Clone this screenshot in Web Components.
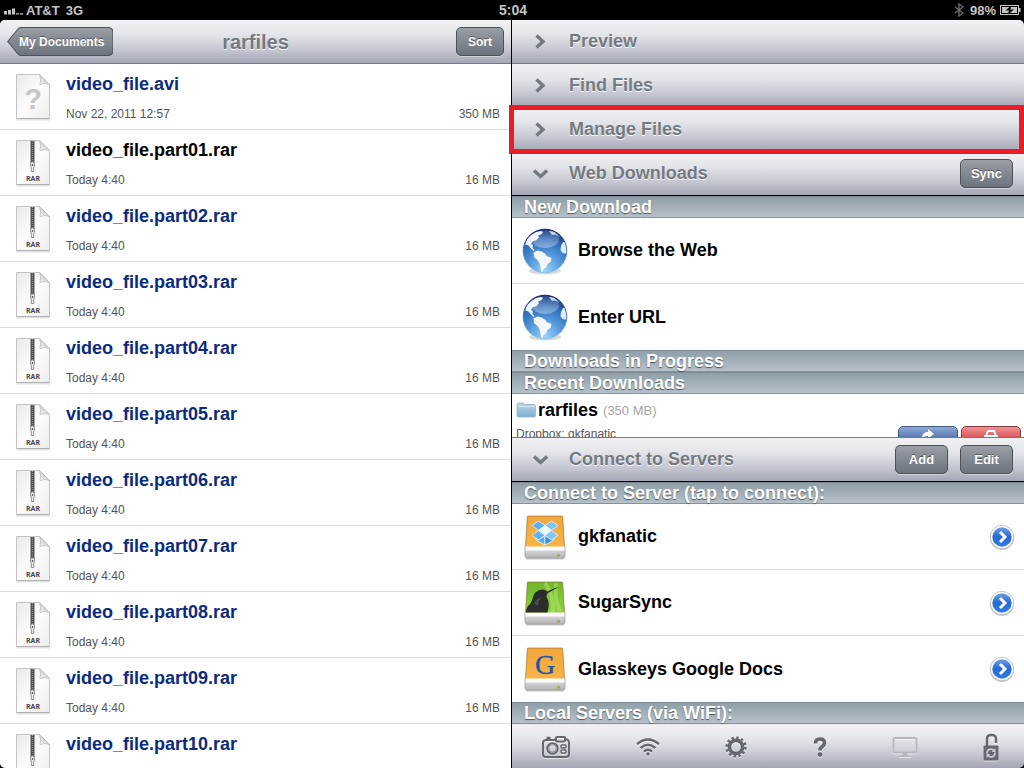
<!DOCTYPE html>
<html lang="en">
<head>
    <meta charset="UTF-8">
    <meta name="viewport" content="width=device-width, initial-scale=1.0">
    <title>rarfiles</title>
    <style>
        body {
            margin: 0;
            background: #000;
            font-family: "Liberation Sans", Arial, Helvetica, sans-serif;
            --bar: linear-gradient(#f2f2f5, #e3e4e9 35%, #c4c7d0 70%, #a3a6b5);
            --bar-line: #757984;
            --label: #747a82;
            --row-line: #dcdcdc;
        }
    </style>
</head>
<body>
    <file-manager></file-manager>

    <script>
        // Creates a shadow root from a template string
        function attach(el, html) {
            const template = document.createElement('template');
            template.innerHTML = html;
            el.attachShadow({ mode: 'open' }).appendChild(template.content.cloneNode(true));
        }

        const page = `
            <defs>
                <linearGradient id="p" x1="0" y1="0" x2="1" y2="1">
                    <stop offset="0" stop-color="#e9e9e9"/><stop offset=".5" stop-color="#fcfcfc"/><stop offset="1" stop-color="#ededed"/>
                </linearGradient>
                <linearGradient id="f" x1="0" y1="1" x2="1" y2="0">
                    <stop offset="0" stop-color="#fff"/><stop offset=".5" stop-color="#d2d2d2"/><stop offset="1" stop-color="#fff"/>
                </linearGradient>
            </defs>
            <path d="M1 47h34" stroke="#000" stroke-opacity=".12" stroke-width="1"/>
            <path d="M1.5 1.5h23l10 10v34h-33z" fill="url(#p)" stroke="#c3c3c3"/>
            <path d="M1.5 45.7h33" stroke="#aaa"/>
            <path d="M24.5 1.5q2 5 .5 10q5-2 9.500 0z" fill="url(#f)" stroke="#bbb" stroke-width=".8"/>`;

        const drive = (id, a, b) => `
            <defs>
                <linearGradient id="${id}" x1="0" y1="0" x2="0" y2="1"><stop offset="0" stop-color="${a}"/><stop offset="1" stop-color="${b}"/></linearGradient>
                <linearGradient id="base" x1="0" y1="0" x2="0" y2="1"><stop offset="0" stop-color="#d4d4d4"/><stop offset="1" stop-color="#b4b4b4"/></linearGradient>
            </defs>
            <path d="M5 45.500h38" stroke="#000" stroke-opacity=".22" stroke-width="2"/>
            <path d="M7 3h34q.6 0 .7.800L43.500 34v3h-39v-3L6.300 3.800q.1-.8.700-.8z" fill="url(#${id})" stroke="#8a6528" stroke-opacity=".75" stroke-width=".8"/>
            <path d="M4 33.500h40V38H4z" fill="#fdfdfd"/>
            <path d="M4 37.500h40V43q0 2-2 2H6q-2 0-2-2z" fill="url(#base)"/>
            <path d="M4 33v10q0 2 2 2h36q2 0 2-2V33" fill="none" stroke="#999" stroke-width=".7"/>
            <circle cx="37.500" cy="42" r="1.500" fill="#9a9a35"/><circle cx="37.500" cy="41.600" r=".6" fill="#e5e58a"/>`;

        const globe = `
            <defs>
                <radialGradient id="g" cx=".5" cy=".95" r="1"><stop offset="0" stop-color="#9bd3fb"/><stop offset=".35" stop-color="#5a9fe0"/><stop offset=".7" stop-color="#2e6bb8"/><stop offset="1" stop-color="#101f66"/></radialGradient>
                <linearGradient id="s" x1="0" y1="0" x2="0" y2="1"><stop offset="0" stop-color="#fff" stop-opacity=".1"/><stop offset="1" stop-color="#fff" stop-opacity=".35"/></linearGradient>
                <linearGradient id="r" x1="0" y1="0" x2="0" y2="1"><stop offset="0" stop-color="#14205c"/><stop offset=".6" stop-color="#5e93cc"/><stop offset="1" stop-color="#8ec2ee"/></linearGradient>
                <clipPath id="c"><circle cx="24" cy="24" r="21.800"/></clipPath>
            </defs>
            <ellipse cx="24" cy="44" rx="16" ry="3.500" fill="#000" fill-opacity=".15"/>
            <circle cx="24" cy="24" r="21.800" fill="url(#g)"/>
            <g clip-path="url(#c)">
                <path d="M4 21Q4 12 11 7.500l4-2.500 5-1 2 1-2 2.500-3 1 1 2-3 3-3 .5-2 3 2 1-.5 3 2 2-1 1-3-3-2-2.500-3-1z" fill="#eef5fc"/>
                <path d="M12.500 25.500l4-2 4 1 4 2.500 1 2 5 2-1 4-3 2-1.500 3.500-2.500 1.500-1 3-1.500-.5-1-7-2-4-4-3.500z" fill="#f5f9fd"/>
                <path d="M47 14l-5 1-2 4-.5 4 2 3 5.500 1z" fill="#dfedf9"/>
                <path d="M28 4l5 .5 6 5.500-5-2.500-3 .5z" fill="#b5d2ec"/>
                <ellipse cx="24" cy="12" rx="14" ry="9" fill="url(#s)"/>
            </g>
            <circle cx="24" cy="24" r="21.800" fill="none" stroke="url(#r)" stroke-width="1"/>`;

        const ICONS = {
            unknown: ['36 48', page + `<text x="18" y="36" text-anchor="middle" font-size="29" font-weight="bold" fill="#c6c6c6">?</text>`],
            rar: ['36 48', page + `
                <path d="M15.500 2h4v22h-4z" fill="#555"/>
                <path d="M17.500 2v21" stroke="#8c8c8c" stroke-dasharray="1 1"/>
                <path d="M16 23h3l.7 4-1 1v4.500h-2.400V28l-1-1z" fill="#eee" stroke="#777" stroke-width=".8"/>
                <circle cx="17.500" cy="26" r=".9" fill="#555"/>
                <text x="18" y="42" text-anchor="middle" font-family="Noto Sans, sans-serif" font-size="7" font-weight="bold" fill="#4a4a4a">RAR</text>`],
            globe: ['48 48', globe],
            dropbox: ['48 48', drive('o', '#f2a63c', '#fbb545') + `
                <g stroke="#eaf5fb" stroke-width=".8" stroke-linejoin="round">
                    <path d="M17.500 8l6.500 4.500-6.500 5-6.500-5z" fill="#5cb0ee"/>
                    <path d="M30.500 8L24 12.500l6.500 5 6.500-5z" fill="#7cc6f6"/>
                    <path d="M24 12.500l6.500 5L24 22.500l-6.500-5z" fill="#eaf7ff"/>
                    <path d="M17.500 17.500l6.500 5-6.500 4.500-6.500-4.500z" fill="#62b2ee"/>
                    <path d="M30.500 17.500l-6.500 5 6.500 4.500 6.500-4.500z" fill="#7fc5f5"/>
                    <path d="M24 22.500L17.500 27 15 25.500V27l9 5z" fill="#5aaeec"/>
                    <path d="M24 22.500l6.500 4.500 2.500-1.500V27l-9 5z" fill="#3a8fd8"/>
                </g>`],
            sugarsync: ['48 48', drive('g', '#6fb42a', '#8fd63c') + `
                <path d="M24 4q9 12 8 29M35 4q-2 16 4 28" fill="none" stroke="#b6e873" stroke-width="4" stroke-opacity=".5"/>
                <path d="M5 33.500q0-5 4-8.500 2-2 3-7 1-5 6.500-7 5-1.500 7.500 1.500l10.500-4.500.3.600L27 14q-2 1-1.500 4 3 5 2 10.500-.5 3-1 5z" fill="#2b2d2b"/>
                <path d="M13 24q3-5 8-6-4 3-4 9" fill="#4a4d49"/>`],
            google: ['48 48', drive('o', '#f2a63c', '#fbb545') + `
                <text x="24" y="29" text-anchor="middle" font-family="Liberation Serif, serif" font-size="28" font-weight="normal" fill="#1f56ae" stroke="#1f56ae" stroke-width=".4">G</text>`],
            folder: ['22 16', `
                <defs><linearGradient id="d" x1="0" y1="0" x2="0" y2="1"><stop offset="0" stop-color="#b5d6ea"/><stop offset="1" stop-color="#7fb0d0"/></linearGradient></defs>
                <path d="M1 2.500q0-1.500 1.500-1.500h5l1.500 1.500h9q1.500 0 1.500 1.500v9.500q0 1.500-1.500 1.500h-16Q1 15 1 13.500z" fill="url(#d)" stroke="#89b0c8" stroke-width=".7"/>
                <path d="M1.500 4.500h17.500" stroke="#d5eaf5"/>`],
            go: ['26 26', `
                <defs>
                    <linearGradient id="b" x1="0" y1="0" x2="0" y2="1"><stop offset="0" stop-color="#6b9fe8"/><stop offset=".5" stop-color="#2769d6"/><stop offset="1" stop-color="#2f7fe6"/></linearGradient>
                </defs>
                <circle cx="13" cy="14" r="12" fill="#000" fill-opacity=".22"/>
                <circle cx="13" cy="13" r="11.700" fill="#fff" stroke="#a9a9a9" stroke-width=".7"/>
                <circle cx="13" cy="13" r="9.700" fill="url(#b)"/>
                <path d="M11 8l5 5-5 5" fill="none" stroke="#fff" stroke-width="3"/>`],
            right: ['16 16', `<path d="M4.500 1.500L11 7.500l-6.500 6" fill="none" stroke="currentColor" stroke-width="3.400"/>`],
            down: ['16 16', `<path d="M2 4.500l6.500 6 6.500-6" fill="none" stroke="currentColor" stroke-width="3.400"/>`],
            camera: ['30 24', `
                <g fill="none" stroke="currentColor" stroke-width="2">
                    <path d="M4 5h9l2-1M24 4q4 .500 4 4v11q0 3-3 3H5q-3 0-3-3V8q0-3 3-3"/>
                    <rect x="15" y="2" width="9" height="4.500" rx="1"/>
                    <circle cx="11.500" cy="13.500" r="5.300"/>
                    <circle cx="11.500" cy="13.500" r="3.700" stroke-width=".6"/>
                    <rect x="20" y="10" width="5" height="3" rx="1" stroke-width="1.600"/>
                    <rect x="20" y="15" width="5" height="3" rx="1" stroke-width="1.600"/>
                    <path d="M5.500 3h4" stroke-width="2.500"/>
                </g>`],
            wifi: ['24 18', `
                <g fill="none" stroke="currentColor" stroke-width="2.400">
                    <path d="M1 6.200Q12-3 23 6.200"/><path d="M4.500 10.200Q12 3.500 19.500 10.200"/><path d="M8 13.700Q12 10 16 13.700"/>
                </g>
                <circle cx="12" cy="16" r="1.700" fill="currentColor"/>`],
            gear: ['22 22', `
                <circle cx="11" cy="11" r="6.600" fill="none" stroke="currentColor" stroke-width="3.600"/>
                <circle cx="11" cy="11" r="9.300" fill="none" stroke="currentColor" stroke-width="2.600" stroke-dasharray="2.400 2.469"/>`],
            help: ['14 20', `
                <path d="M2.500 6.500Q2.500 2 7 2t4.500 4q0 2-2.500 3.800Q7 11.200 7 13.500" fill="none" stroke="currentColor" stroke-width="3.600"/>
                <circle cx="7" cy="17.500" r="2.300" fill="currentColor"/>`],
            monitor: ['26 22', `
                <rect x="1.500" y="2" width="23" height="14.500" rx="1.500" fill="none" stroke="currentColor" stroke-width="2"/>
                <path d="M10.500 17h5v2.500h3.500v1.500H7v-1.500h3.500z" fill="currentColor"/>`],
            lock: ['16 28', `
                <path d="M4 14V5.500Q4 2 8.500 2T13 5.500V10" fill="none" stroke="currentColor" stroke-width="2.400"/>
                <rect x=".5" y="12.500" width="15" height="15" rx="1" fill="currentColor"/>
                <path d="M4 20.500A4 4 0 0 1 10.500 17M12 19.500A4 4 0 0 1 5.500 23" fill="none" stroke="#c9ccd4" stroke-width="1.700"/>
                <path d="M12.500 15v4h-4zM3.500 25v-4h4z" fill="#c9ccd4"/>`],
            share: ['20 16', `<path d="M3 12q1-8 7-8V1l6 5-6 4.500V8Q5 8 3 12z" fill="#fff"/>`],
            tray: ['20 16', `<path d="M3 8h14M5 8l2-5h6l2 5M4 8v6h12V8" fill="none" stroke="#fff" stroke-width="2"/>`],
            signal: ['20 10', `
                <path d="M0 6h3v3.500H0zM4 5h3v4.500H4zM8 3.500h3v6H8z" fill="currentColor"/>
                <path d="M12 8.300h3v1.200h-3zM16 8.300h3v1.200h-3z" fill="currentColor"/>`],
            bluetooth: ['10 14', `<path d="M1 4l8 6-4 3V1l4 3-8 6" fill="none" stroke="#707070" stroke-width="1.300"/>`],
            battery: ['22 10', `
                <rect x=".5" y=".5" width="18" height="9" fill="none" stroke="currentColor"/>
                <path d="M2 2h15v6H2zM19 3h1.500v4H19z" fill="currentColor"/>
                <path d="M11 .5L5.500 5.500h3.500L8 9.500l6-5h-3.500z" fill="#000"/>`]
        };

        class AppIcon extends HTMLElement {
            connectedCallback() {
                if (this.shadowRoot) return;
                const [size, body] = ICONS[this.getAttribute('name')];
                const [w, h] = size.split(' ');
                attach(this, `
                    <style>
                        :host { display: block; flex: none; line-height: 0; }
                        svg { display: block; }
                    </style>
                    <svg width="${w}" height="${h}" viewBox="0 0 ${w} ${h}" aria-hidden="true">${body}</svg>
                `);
            }
        }

        class StatusBar extends HTMLElement {
            constructor() {
                super();
                attach(this, `
                    <style>
                        :host {
                            display: grid;
                            grid-template-columns: 1fr auto 1fr;
                            align-items: center;
                            height: 20px;
                            padding: 0 2px 0 4px;
                            background: #000;
                            color: #c4c4c4;
                            font-size: 13px;
                            font-weight: bold;
                        }
                        div { display: flex; align-items: center; }
                        .carrier { margin-left: 2px; }
                        .network { margin-left: 6px; }
                        .time { font-size: 14px; }
                        .right { justify-content: flex-end; gap: 4px; }
                        .right span { margin-left: 2px; }
                    </style>
                    <div>
                        <app-icon name="signal"></app-icon>
                        <span class="carrier">AT&amp;T</span>
                        <span class="network">3G</span>
                    </div>
                    <div class="time">5:04</div>
                    <div class="right">
                        <app-icon name="bluetooth"></app-icon>
                        <span>98%</span>
                        <app-icon name="battery"></app-icon>
                    </div>
                `);
            }
        }

        class BarButton extends HTMLElement {
            constructor() {
                super();
                attach(this, `
                    <style>
                        :host { display: block; }
                        button {
                            display: block;
                            box-sizing: border-box;
                            position: relative;
                            height: 29px;
                            margin: 0;
                            padding: 0 11px;
                            border: 1px solid #4d525a;
                            border-radius: 5px;
                            background: linear-gradient(#9b9fa6, #838991 50%, #6c737c);
                            box-shadow: 0 1px 0 rgba(255, 255, 255, 0.4);
                            color: #fff;
                            font: bold 12px "Liberation Sans", Arial, sans-serif;
                            text-shadow: 0 -1px 0 rgba(0, 0, 0, 0.4);
                            white-space: nowrap;
                        }
                        :host([wide]) button { min-width: 53px; padding: 0 8px; font-size: 13px; }
                        svg { display: none; }
                        span { position: relative; }
                        :host([back]) button {
                            padding: 0 9px 0 12px;
                            border: 0;
                            background: none;
                            box-shadow: none;
                        }
                        :host([back]) svg { display: block; position: absolute; inset: 0; width: 100%; height: 100%; }
                    </style>
                    <button type="button">
                        <svg viewBox="0 0 106 29" preserveAspectRatio="none" aria-hidden="true">
                            <defs><linearGradient id="a" x1="0" y1="0" x2="0" y2="1"><stop offset="0" stop-color="#9b9fa6"/><stop offset=".5" stop-color="#838991"/><stop offset="1" stop-color="#6c737c"/></linearGradient></defs>
                            <path d="M.7 14.500L10.500 2.500Q12 .5 14 .5h86.500q5 0 5 5v18q0 5-5 5H14q-2 0-3.500-2z" fill="url(#a)" stroke="#4d525a"/>
                        </svg>
                        <span><slot></slot></span>
                    </button>
                `);
            }
        }

        class FileRow extends HTMLElement {
            constructor() {
                super();
                attach(this, `
                    <style>
                        :host { display: block; border-bottom: 1px solid var(--row-line); }
                        a {
                            display: grid;
                            grid-template: 22px 16px / 36px 1fr auto;
                            column-gap: 15px;
                            row-gap: 11px;
                            box-sizing: border-box;
                            height: 65px;
                            padding: 9px 11px 7px 15px;
                            color: #555;
                            text-decoration: none;
                            font-size: 12px;
                            line-height: 16px;
                        }
                        app-icon { grid-row: 1 / 3; }
                        .name { grid-column: 2 / 4; color: #0a2b80; font-size: 18px; font-weight: bold; line-height: 22px; }
                        :host([current]) .name { color: #000; }
                    </style>
                    <a href="#">
                        <app-icon name="${this.getAttribute('icon') || 'rar'}"></app-icon>
                        <span class="name"><slot></slot></span>
                        <span>${this.getAttribute('date') || 'Today 4:40'}</span>
                        <span>${this.getAttribute('size') || '16 MB'}</span>
                    </a>
                `);
            }
        }

        class FileList extends HTMLElement {
            constructor() {
                super();
                attach(this, `
                    <style>
                        :host { display: flex; flex-direction: column; min-width: 0; min-height: 0; background: #fff; overflow: hidden; border-radius: 5px 0 0 5px; }
                        header {
                            display: grid;
                            grid-template-columns: 1fr auto 1fr;
                            align-items: center;
                            box-sizing: border-box;
                            flex: none;
                            height: 44px;
                            padding: 0 7px;
                            background: var(--bar);
                            border-bottom: 1px solid var(--bar-line);
                        }
                        h1 { margin: 0; color: var(--label); font-size: 20px; line-height: 24px; text-shadow: 0 1px 0 #fff; }
                        bar-button { justify-self: start; }
                        bar-button:last-child { justify-self: end; }
                        .rows { flex: 1; min-height: 0; overflow: hidden; }
                    </style>
                    <header>
                        <bar-button back>My Documents</bar-button>
                        <h1>rarfiles</h1>
                        <bar-button>Sort</bar-button>
                    </header>
                    <div class="rows"><slot></slot></div>
                `);
            }
        }

        class PanelHeader extends HTMLElement {
            constructor() {
                super();
                const open = this.hasAttribute('open');
                attach(this, `
                    <style>
                        :host {
                            display: flex;
                            align-items: center;
                            gap: 12px;
                            position: relative;
                            box-sizing: border-box;
                            flex: none;
                            height: 44px;
                            padding-right: 11px;
                            background: var(--bar);
                            border-bottom: 1px solid var(--bar-line);
                        }
                        :host([open]) { border-bottom-color: #000; }
                        :host([docked]) { height: 45px; border-top: 1px solid var(--bar-line); }
                        .toggle {
                            display: flex;
                            align-items: center;
                            flex: 1;
                            gap: 21px;
                            height: 100%;
                            margin: 0;
                            padding: 0 0 0 20px;
                            border: 0;
                            background: none;
                            color: var(--label);
                            font: bold 18px "Liberation Sans", Arial, sans-serif;
                            text-shadow: 0 1px 0 #fff;
                            text-align: left;
                        }
                        /* Red frame drawn round the marked panel */
                        :host([marked])::after {
                            content: "";
                            position: absolute;
                            inset: -3px 0 -3px -3px;
                            border: 5px solid #ea1c25;
                            z-index: 2;
                            pointer-events: none;
                        }
                    </style>
                    <button class="toggle" type="button" aria-expanded="${open}">
                        <app-icon name="${open ? 'down' : 'right'}"></app-icon>
                        <slot></slot>
                    </button>
                    <slot name="actions"></slot>
                `);
            }
        }

        class SectionTitle extends HTMLElement {
            constructor() {
                super();
                attach(this, `
                    <style>
                        :host {
                            display: block;
                            box-sizing: border-box;
                            height: 22px;
                            padding-left: 12px;
                            background: linear-gradient(#8f9ea7, #b6c1ca);
                            border-top: 1px solid #7f8b94;
                            border-bottom: 1px solid #87919a;
                        }
                        h2 { margin: 0; color: #fff; font-size: 18px; line-height: 20px; text-shadow: 0 1px 1px #4f5960; }
                    </style>
                    <h2><slot></slot></h2>
                `);
            }
        }

        class ActionRow extends HTMLElement {
            constructor() {
                super();
                attach(this, `
                    <style>
                        :host { display: flex; align-items: center; box-sizing: border-box; height: 66px; padding-right: 9px; border-bottom: 1px solid var(--row-line); }
                        :host([last]) { border-bottom: 0; }
                        a { display: flex; align-items: center; flex: 1; gap: 9px; padding-left: 9px; color: #000; font-size: 18px; font-weight: bold; text-decoration: none; }
                        button { margin: 0; padding: 0; border: 0; background: none; }
                    </style>
                    <a href="#"><app-icon name="${this.getAttribute('icon')}"></app-icon><slot></slot></a>
                    ${this.hasAttribute('detail') ? '<button type="button" aria-label="Details"><app-icon name="go"></app-icon></button>' : ''}
                `);
            }
        }

        class DownloadRow extends HTMLElement {
            constructor() {
                super();
                attach(this, `
                    <style>
                        :host { display: block; height: 66px; padding: 0 3px 0 4px; color: #555; font-size: 12px; }
                        div { display: flex; align-items: center; }
                        .title { height: 32px; }
                        b { color: #000; font-size: 18px; }
                        .size { margin-left: 5px; color: #a5a5a5; font-size: 13px; }
                        .info { align-items: flex-start; gap: 3px; }
                        .info span { flex: 1; line-height: 16px; }
                        button {
                            display: flex;
                            justify-content: center;
                            box-sizing: border-box;
                            width: 60px;
                            height: 29px;
                            margin: 0;
                            padding: 1px 0;
                            border: 1px solid #455a80;
                            border-radius: 5px;
                            background: linear-gradient(#8fa9d3, #5879b2 40%, #3c5f9f);
                        }
                        .remove { border-color: #87393d; background: linear-gradient(#ee9293, #dc5558 40%, #c6282c); }
                    </style>
                    <div class="title"><app-icon name="folder"></app-icon><b>rarfiles</b><span class="size">(350 MB)</span></div>
                    <div class="info">
                        <span>Dropbox: gkfanatic</span>
                        <button type="button" aria-label="Open"><app-icon name="share"></app-icon></button>
                        <button class="remove" type="button" aria-label="Remove"><app-icon name="tray"></app-icon></button>
                    </div>
                `);
            }
        }

        class ToolBar extends HTMLElement {
            constructor() {
                super();
                const tools = [['camera', 'Camera'], ['wifi', 'WiFi'], ['gear', 'Settings'], ['help', 'Help'], ['monitor', 'Display'], ['lock', 'Lock']];
                attach(this, `
                    <style>
                        :host {
                            display: flex;
                            justify-content: space-between;
                            align-items: center;
                            box-sizing: border-box;
                            flex: none;
                            height: 44px;
                            padding: 0 25px 0 29px;
                            background: var(--bar);
                            border-top: 1px solid #e8e9ed;
                        }
                        button { margin: 0; padding: 0; border: 0; background: none; color: #63676e; filter: drop-shadow(0 1px 0 rgba(255, 255, 255, 0.6)); }
                        button:disabled { color: #b5b7be; }
                    </style>
                    ${tools.map(([icon, label]) => `<button type="button" aria-label="${label}" ${icon === 'monitor' ? 'disabled' : ''}><app-icon name="${icon}"></app-icon></button>`).join('')}
                `);
            }
        }

        class FileManager extends HTMLElement {
            constructor() {
                super();
                const parts = ['02', '03', '04', '05', '06', '07', '08', '09', '10'];
                attach(this, `
                    <style>
                        :host { display: grid; grid-template-rows: auto minmax(0, 1fr); height: 100vh; overflow: hidden; }
                        main { display: grid; grid-template-columns: minmax(0, 1fr) minmax(0, 1fr); min-height: 0; }
                        file-list { margin-right: 1px; }
                        .side { display: flex; flex-direction: column; min-height: 0; }
                        .side panel-header:first-child { border-top-right-radius: 5px; }
                        section { flex: none; background: #fff; overflow: hidden; }
                        .downloads { flex: 1; min-height: 0; }
                        tool-bar { border-bottom-right-radius: 5px; }
                    </style>
                    <status-bar></status-bar>
                    <main>
                        <file-list>
                            <file-row icon="unknown" date="Nov 22, 2011 12:57" size="350 MB">video_file.avi</file-row>
                            <file-row current>video_file.part01.rar</file-row>
                            ${parts.map(n => `<file-row>video_file.part${n}.rar</file-row>`).join('')}
                        </file-list>
                        <div class="side">
                            <panel-header>Preview</panel-header>
                            <panel-header>Find Files</panel-header>
                            <panel-header marked>Manage Files</panel-header>
                            <panel-header open>Web Downloads<bar-button wide slot="actions">Sync</bar-button></panel-header>
                            <section class="downloads">
                                <section-title>New Download</section-title>
                                <action-row icon="globe">Browse the Web</action-row>
                                <action-row icon="globe" last>Enter URL</action-row>
                                <section-title>Downloads in Progress</section-title>
                                <section-title>Recent Downloads</section-title>
                                <download-row></download-row>
                            </section>
                            <panel-header open docked>Connect to Servers<bar-button wide slot="actions">Add</bar-button><bar-button wide slot="actions">Edit</bar-button></panel-header>
                            <section>
                                <section-title>Connect to Server (tap to connect):</section-title>
                                <action-row icon="dropbox" detail>gkfanatic</action-row>
                                <action-row icon="sugarsync" detail>SugarSync</action-row>
                                <action-row icon="google" detail last>Glasskeys Google Docs</action-row>
                                <section-title>Local Servers (via WiFi):</section-title>
                            </section>
                            <tool-bar></tool-bar>
                        </div>
                    </main>
                `);
            }
        }

        // Inner elements first, the page element last
        customElements.define('app-icon', AppIcon);
        customElements.define('status-bar', StatusBar);
        customElements.define('bar-button', BarButton);
        customElements.define('file-row', FileRow);
        customElements.define('file-list', FileList);
        customElements.define('panel-header', PanelHeader);
        customElements.define('section-title', SectionTitle);
        customElements.define('action-row', ActionRow);
        customElements.define('download-row', DownloadRow);
        customElements.define('tool-bar', ToolBar);
        customElements.define('file-manager', FileManager);
    </script>
</body>
</html>
